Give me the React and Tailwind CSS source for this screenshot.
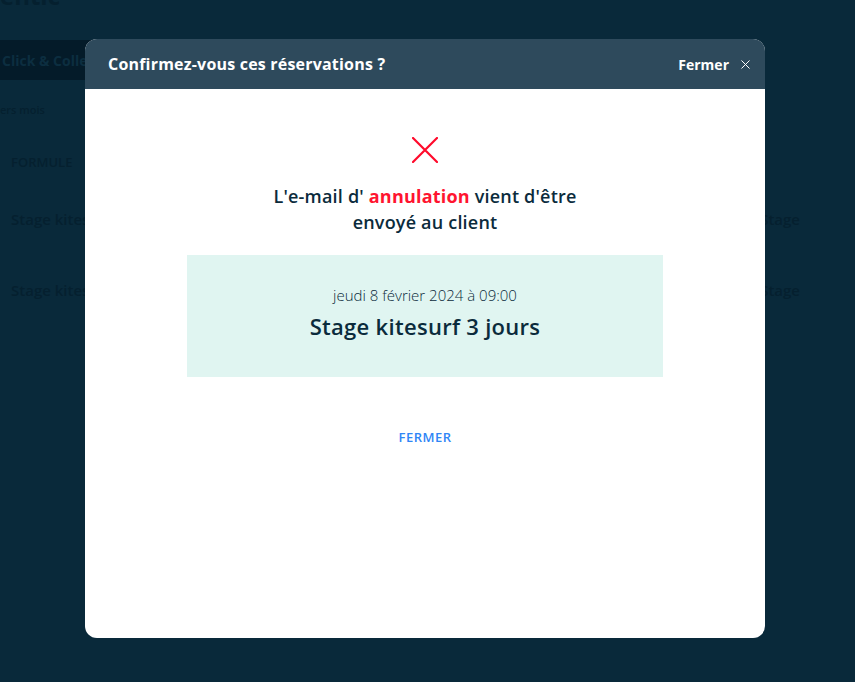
import { X } from 'lucide-react';

const font = { fontFamily: '"Open Sans", "Noto Sans", sans-serif' };

function Background() {
  return (
    <div className="relative h-[682px] w-[855px] overflow-hidden bg-[#09293a] text-[#05202f]">
      <div className="absolute -top-[16px] left-0 text-[24px] font-bold leading-[24px]">entic</div>
      <div className="pt-[40px]">
        <div className="flex h-[40px] w-[120px] items-center bg-[#041b29] pl-[2px] text-[14px] font-bold text-[#0c2e40]">
          Click &amp; Colle
        </div>
        <div className="mt-[22px] text-[11px] font-semibold">ers mois</div>
        <div className="mt-[34px] pl-[11px] text-[13px] font-semibold">FORMULE</div>
        <div className="mt-[36px] flex justify-between pl-[11px] text-[15px] font-semibold">
          <span>Stage kitesurf</span>
          <span className="pr-[55px]">Stage</span>
        </div>
        <div className="mt-[48px] flex justify-between pl-[11px] text-[15px] font-semibold">
          <span>Stage kitesurf</span>
          <span className="pr-[55px]">Stage</span>
        </div>
      </div>
    </div>
  );
}

function Modal() {
  return (
    <div className="absolute left-[85px] top-[39px] flex h-[599px] w-[680px] flex-col overflow-hidden rounded-[12px] bg-white">
      <div className="flex h-[50px] items-center justify-between bg-[#2e4a5c] pl-[23px] pr-[12px] text-white">
        <span className="text-[16px] font-bold tracking-[0.2px]">Confirmez-vous ces réservations ?</span>
        <button className="flex items-center gap-[9px] text-[14px] font-bold">
          Fermer
          <X size={15} strokeWidth={1.6} />
        </button>
      </div>
      <div className="flex flex-col items-center pt-[48px]">
        <svg width="26" height="26" viewBox="0 0 26 26" fill="none">
          <path d="M1 1L25 25M25 1L1 25" stroke="#ff0a2b" strokeWidth="2.2" strokeLinecap="round" />
        </svg>
        <p className="mt-[20px] text-center text-[18px] font-semibold leading-[26px] tracking-[0.2px] text-[#0b2b3c]">
          L'e-mail d' <span className="font-bold text-[#ff1430]">annulation</span> vient d'être
          <br />
          envoyé au client
        </p>
        <div className="mt-[20px] flex h-[122px] w-[476px] flex-col items-center bg-[#e0f5f1] pt-[30px] text-[#0b2b3c]">
          <div className="text-[15px] font-light leading-[20px]">jeudi 8 février 2024 à 09:00</div>
          <div className="mt-[7px] text-[22px] font-semibold leading-[28px] tracking-[0.3px]">Stage kitesurf 3 jours</div>
        </div>
        <button className="mt-[50px] text-[13px] font-semibold leading-[20px] tracking-[0.5px] text-[#2f86f6]">FERMER</button>
      </div>
    </div>
  );
}

export default function App() {
  return (
    <div className="relative h-[682px] w-[855px]" style={font}>
      <Background />
      <Modal />
    </div>
  );
}
